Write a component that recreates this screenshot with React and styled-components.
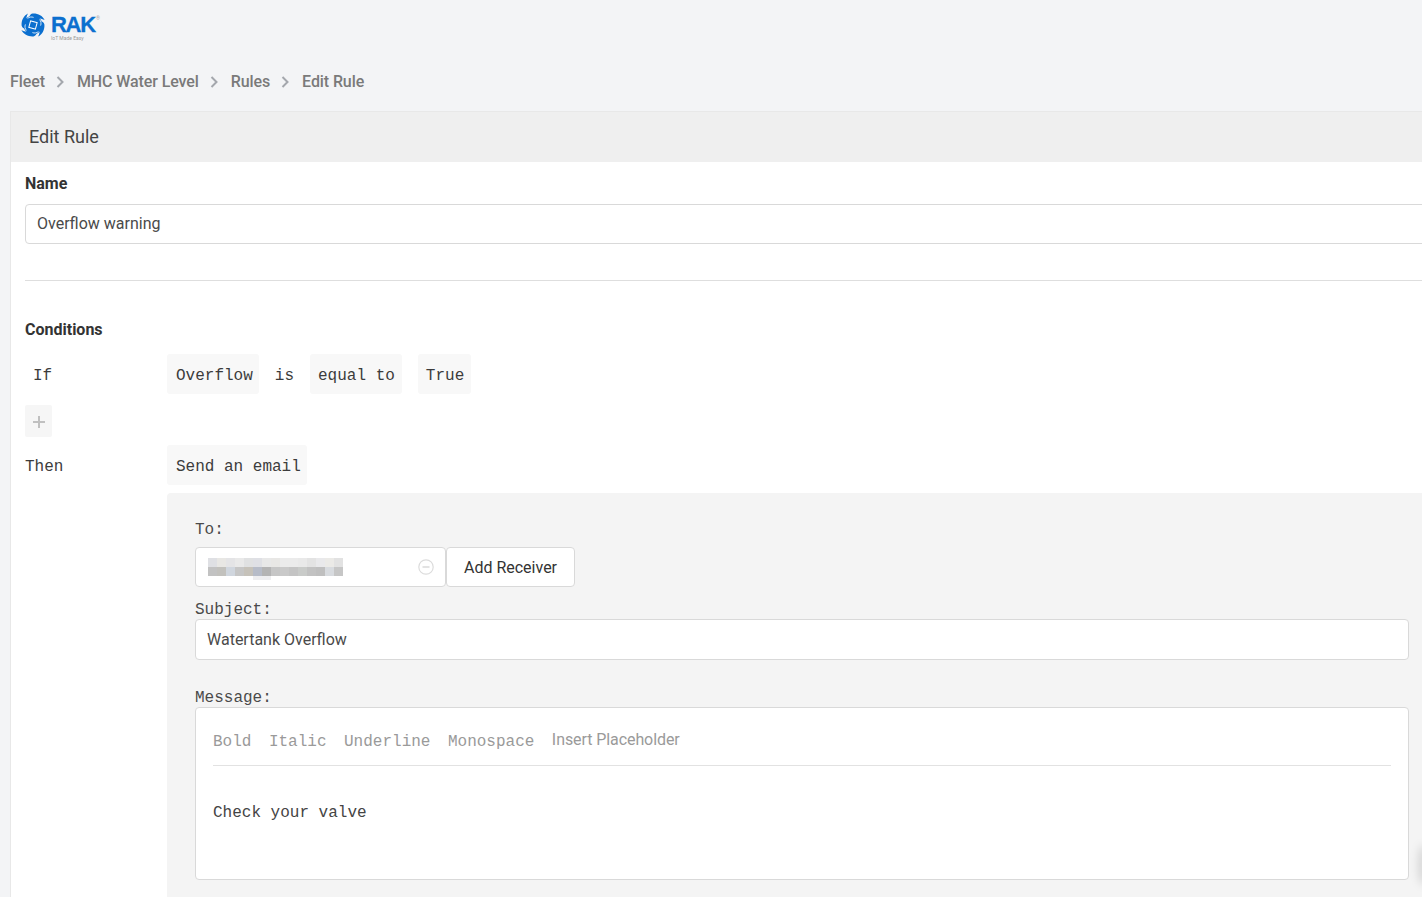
import React from "react"
import styled, { createGlobalStyle } from "styled-components"

const GlobalStyle = createGlobalStyle`
  html, body {
    margin: 0;
    padding: 0;
    height: 100%;
    overflow: hidden;
    background: #f3f4f6;
  }
  * {
    box-sizing: border-box;
  }
`

const MONO = `"Liberation Mono", monospace`
const SANS = `Roboto, "Liberation Sans", sans-serif`

const Page = styled.div`
  width: 1422px;
  height: 897px;
  overflow: hidden;
  position: relative;
  font-family: ${SANS};
  color: #333;
`

const Logo = styled.div`
  display: flex;
  align-items: flex-start;
  height: 69px;
  padding: 13px 0 0 21px;
`

const LogoWords = styled.div`
  margin: 2px 0 0 6px;
  color: #0b6fcf;
  position: relative;
  line-height: 1;
`

const LogoName = styled.div`
  font-family: "Liberation Sans", sans-serif;
  font-weight: 700;
  font-size: 22px;
  line-height: 19px;
  letter-spacing: -1.3px;
  -webkit-text-stroke: 0.3px #0b6fcf;
`

const LogoTag = styled.div`
  margin-top: 1px;
  font-size: 5px;
  color: #9a9a9a;
  line-height: 6px;
`

const Registered = styled.span`
  position: absolute;
  left: 45px;
  top: 1px;
  font-size: 5px;
  color: #aaa;
`

const Crumbs = styled.nav`
  display: flex;
  align-items: center;
  height: 26px;
  margin-top: -1px;
  padding-left: 10px;
  font-size: 16px;
  font-weight: 500;
  letter-spacing: -0.1px;
  color: #7a7a7a;
`

const Chevron = styled.svg`
  width: 8px;
  height: 12px;
  margin: 2px 13px 0 11px;
  fill: none;
  stroke: #a4a7ad;
  stroke-width: 2;
`

const Panel = styled.section`
  width: 1600px;
  margin: 17px 0 0 10px;
  background: #fff;
  border: 1px solid #e8e8e8;
  border-bottom: 0;
`

const PanelHead = styled.h2`
  margin: 0;
  height: 50px;
  padding-left: 18px;
  background: #efefef;
  font-size: 18px;
  font-weight: 400;
  line-height: 50px;
  color: #444;
`

const PanelBody = styled.div`
  padding: 0 14px;
`

const FieldLabel = styled.div`
  font-size: 16px;
  font-weight: 700;
  color: #333;
  line-height: 20px;
`

const NameBlock = styled.div`
  padding-top: 12px;
  padding-bottom: 36px;
  border-bottom: 1px solid #dedede;
`

const TextField = styled.div`
  display: flex;
  align-items: center;
  height: ${(p) => p.$height || 40}px;
  margin-top: ${(p) => p.$top || 0}px;
  padding: 0 0 ${(p) => p.$lift ?? 2}px 11px;
  background: #fff;
  border: 1px solid #d9d9d9;
  border-radius: 4px;
  font-family: ${SANS};
  font-size: 16px;
  color: #4a4a4a;
`

const Conditions = styled.div`
  padding-top: 39px;
`

const RuleRow = styled.div`
  display: flex;
  align-items: center;
  height: 40px;
  margin-top: ${(p) => p.$top || 0}px;
  font-family: ${MONO};
  font-size: 16px;
  color: #3c3c3c;
`

const RuleLabel = styled.div`
  width: 142px;
  padding-top: 4px;
  padding-left: ${(p) => p.$indent || 0}px;
`

const Token = styled.div`
  height: 40px;
  line-height: 44px;
  padding: 0 ${(p) => 15 - (p.$left || 8)}px 0 ${(p) => p.$left || 8}px;
  margin-right: ${(p) => p.$gap || 0}px;
  background: #f8f8f8;
  border-radius: 3px;
`

const Word = styled.div`
  padding: 4px 16px 0;
`

const AddButton = styled.div`
  display: flex;
  align-items: center;
  justify-content: center;
  width: 27px;
  height: 32px;
  margin-top: 11px;
  padding-top: 1px;
  background: #f6f6f6;
  border-radius: 2px;
  color: #c0c0c0;
`

const EmailBox = styled.div`
  margin: 8px 0 0 142px;
  padding: 25px 0 40px 28px;
  background: #f4f4f4;
  border-radius: 4px;
`

const EmailInner = styled.div`
  width: 1214px;
  font-family: ${MONO};
  font-size: 16px;
  color: #4a4a4a;
`

const MonoLabel = styled.div`
  line-height: 24px;
  margin-top: ${(p) => p.$top || 0}px;
  margin-bottom: -4px;
`

const ReceiverRow = styled.div`
  display: flex;
  margin-top: 9px;
  height: 40px;
  margin-bottom: 11px;
  font-family: ${SANS};
`

const ReceiverField = styled.div`
  display: flex;
  align-items: center;
  justify-content: space-between;
  width: 251px;
  padding: 0 11px 0 12px;
  background: #fff;
  border: 1px solid #d9d9d9;
  border-radius: 4px;
`

const AddReceiver = styled.div`
  display: flex;
  align-items: center;
  justify-content: center;
  width: 129px;
  background: #fff;
  border: 1px solid #d9d9d9;
  border-radius: 4px;
  font-size: 16px;
  color: #333;
`

const RemoveIcon = styled.svg`
  width: 16px;
  height: 16px;
  fill: none;
  stroke: #dcdcdc;
  stroke-width: 1.2;
`

const Mosaic = styled.svg`
  display: block;
  width: 135px;
  height: 22px;
  margin-top: 3px;
`

const Editor = styled.div`
  height: 173px;
  margin-top: 1px;
  padding: 0 17px;
  background: #fff;
  border: 1px solid #d9d9d9;
  border-radius: 4px;
`

const Toolbar = styled.div`
  display: flex;
  align-items: center;
  height: 58px;
  padding-top: 10px;
  border-bottom: 1px solid #e2e2e2;
  color: #9a9a9a;
`

const ToolItem = styled.span`
  margin-right: 17.5px;
`

const ToolSans = styled.span`
  font-family: ${SANS};
  margin-top: -4px;
  letter-spacing: -0.08px;
`

const EditorText = styled.div`
  margin-top: 35px;
  line-height: 24px;
  color: #444;
`

const EdgeShadow = styled.div`
  position: absolute;
  left: 1418px;
  top: 845px;
  width: 10px;
  height: 40px;
  border-radius: 50%;
  background: rgba(0, 0, 0, 0.12);
  filter: blur(4px);
`

const topRow = ["#dfe0e4", "#e8e7e4", "#e4e4e6", "#e9e9e9", "#e0e1e2", "#dfe0e5", "#e8e8e8", "#e8e7e5", "#ebebeb", "#ebebeb", "#e9e9e9", "#e3e3e3", "#e9e9eb", "#ebeae7", "#e2e2e2"]
const midRow = ["#c2c2c2", "#c2c1bd", "#d0d6de", "#c6c6c6", "#c6c2ba", "#b7bcc8", "#b4b4b4", "#c6c6c6", "#c9c9c9", "#c4c4c4", "#c9cbc9", "#c2c2c2", "#bfbfbf", "#d8dbdf", "#c6c6c6"]

const Blade = ({ angle }) => (
  <g transform={`rotate(${angle} 12 12)`}>
    <path d="M11.5 .6C16.6 .2 21.4 2.6 23.6 7 21 5.4 18 5 15.4 5.8L14 9.2 9.6 8.2 8.8 2.4C9.6 1.4 10.5 .8 11.5 .6Z" />
    <path d="M6.6 5.4C8.2 4 10.6 3.6 12.6 4.4" fill="none" stroke="#fff" strokeWidth=".8" />
  </g>
)

const App = () => (
  <Page>
    <GlobalStyle />
    <Logo>
      <svg width="24" height="24" viewBox="0 0 24 24" fill="#0b6fcf">
        <circle cx="12" cy="12" r="9.5" />
        <Blade angle={0} />
        <Blade angle={90} />
        <Blade angle={180} />
        <Blade angle={270} />
        <rect x="8.6" y="8.6" width="6.8" height="6.8" transform="rotate(15 12 12)" fill="none" stroke="#fff" strokeWidth="1" />
      </svg>
      <LogoWords>
        <LogoName>RAK</LogoName>
        <Registered>®</Registered>
        <LogoTag>IoT Made Easy</LogoTag>
      </LogoWords>
    </Logo>

    <Crumbs>
      Fleet
      <Chevron viewBox="0 0 8 12"><path d="M1.5 1l5 5-5 5" /></Chevron>
      MHC Water Level
      <Chevron viewBox="0 0 8 12"><path d="M1.5 1l5 5-5 5" /></Chevron>
      Rules
      <Chevron viewBox="0 0 8 12"><path d="M1.5 1l5 5-5 5" /></Chevron>
      Edit Rule
    </Crumbs>

    <Panel>
      <PanelHead>Edit Rule</PanelHead>
      <PanelBody>
        <NameBlock>
          <FieldLabel>Name</FieldLabel>
          <TextField $top={10}>Overflow warning</TextField>
        </NameBlock>

        <Conditions>
          <FieldLabel>Conditions</FieldLabel>
          <RuleRow $top={14}>
            <RuleLabel $indent={8}>If</RuleLabel>
            <Token $left={9}>Overflow</Token>
            <Word>is</Word>
            <Token $gap={16}>equal to</Token>
            <Token>True</Token>
          </RuleRow>
          <AddButton>
            <svg width="14" height="14" viewBox="0 0 14 14" stroke="currentColor" strokeWidth="2">
              <path d="M7 1v12M1 7h12" />
            </svg>
          </AddButton>
          <RuleRow $top={8}>
            <RuleLabel>Then</RuleLabel>
            <Token $left={9}>Send an email</Token>
          </RuleRow>
        </Conditions>

        <EmailBox>
          <EmailInner>
            <MonoLabel>To:</MonoLabel>
            <ReceiverRow>
              <ReceiverField>
                <Mosaic viewBox="0 0 135 22" shapeRendering="crispEdges">
                  {topRow.map((c, i) => <rect key={i} x={i * 9} y="0" width="9" height="9" fill={c} />)}
                  {midRow.map((c, i) => <rect key={i} x={i * 9} y="9" width="9" height="9" fill={c} />)}
                  <rect x="45" y="18" width="18" height="4" fill="#eeeef0" />
                </Mosaic>
                <RemoveIcon viewBox="0 0 16 16">
                  <circle cx="8" cy="8" r="7.2" />
                  <path d="M4.5 8h7" strokeWidth="1.6" />
                </RemoveIcon>
              </ReceiverField>
              <AddReceiver>Add Receiver</AddReceiver>
            </ReceiverRow>
            <MonoLabel>Subject:</MonoLabel>
            <TextField $height={41} $top={1} $lift={1}>Watertank Overflow</TextField>
            <MonoLabel $top={26}>Message:</MonoLabel>
            <Editor>
              <Toolbar>
                <ToolItem>Bold</ToolItem>
                <ToolItem>Italic</ToolItem>
                <ToolItem>Underline</ToolItem>
                <ToolItem>Monospace</ToolItem>
                <ToolSans>Insert Placeholder</ToolSans>
              </Toolbar>
              <EditorText>Check your valve</EditorText>
            </Editor>
          </EmailInner>
        </EmailBox>
      </PanelBody>
    </Panel>
    <EdgeShadow />
  </Page>
)

export default App
